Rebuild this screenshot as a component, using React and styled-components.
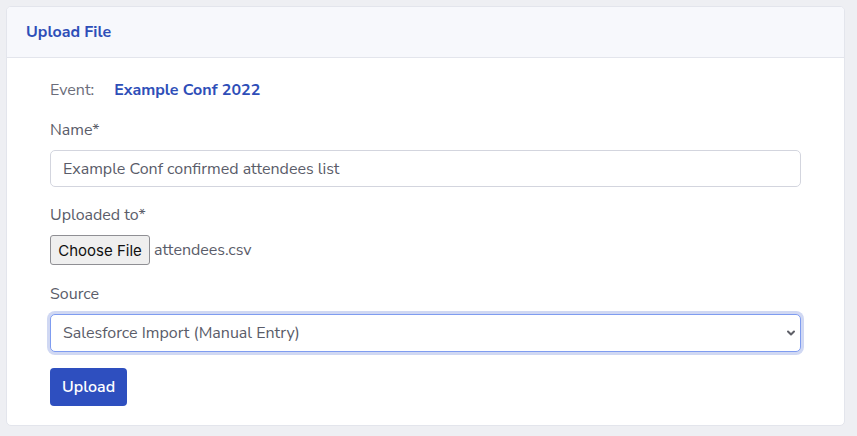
import React, { useState } from "react";
import styled, { createGlobalStyle } from "styled-components";

const GlobalStyle = createGlobalStyle`
  html, body {
    margin: 0;
    padding: 0;
    background: #eeeff3;
  }
  body {
    font-family: "Nunito Sans", "Open Sans", "Noto Sans", sans-serif;
    color: #5a5c69;
  }
`;

const Page = styled.div`
  padding: 6px 12px 10px 6px;
`;

const Card = styled.div`
  background: #fff;
  border: 1px solid #e3e5ec;
  border-radius: 5px;
  overflow: hidden;
`;

const CardHeader = styled.div`
  height: 50px;
  display: flex;
  align-items: center;
  padding: 0 19px;
  background: #f7f8fc;
  border-bottom: 1px solid #e3e5ec;
`;

const Title = styled.h2`
  margin: 0;
  font-size: 16px;
  font-weight: 700;
  color: #2e4eb8;
`;

const Form = styled.form`
  display: flex;
  flex-direction: column;
  padding: 21px 43px 19px;
`;

const EventRow = styled.div`
  display: flex;
  align-items: center;
  gap: 20px;
  font-size: 16px;
  line-height: 22px;
  margin-bottom: 18px;
`;

const EventLabel = styled.span`
  color: #6b6d7a;
`;

const EventName = styled.span`
  color: #2e4eb8;
  font-weight: 700;
`;

const Label = styled.label`
  font-size: 16px;
  line-height: 22px;
  margin-bottom: 9px;
`;

const Field = styled.div`
  display: flex;
  flex-direction: column;
  margin-bottom: ${(p) => p.$gap || 17}px;
`;

const TextInput = styled.input`
  box-sizing: border-box;
  height: 37px;
  padding: 0 12px;
  border: 1px solid #d3d5de;
  border-radius: 5px;
  font-family: inherit;
  font-size: 16px;
  color: #5a5c69;
  outline: none;
`;

const FileRow = styled.div`
  display: flex;
  align-items: center;
  gap: 4px;
  font-size: 16px;
  color: #5a5c69;
`;

const FileButton = styled.button`
  box-sizing: border-box;
  height: 30px;
  width: 100px;
  padding: 0;
  border: 1px solid #8f8f94;
  border-radius: 3px;
  background: #efefef;
  font-family: "Inter", "Liberation Sans", sans-serif;
  font-size: 15px;
  color: #111;
`;

const SelectWrap = styled.div`
  position: relative;
`;

const Select = styled.select`
  box-sizing: border-box;
  width: 100%;
  height: 38px;
  padding: 0 12px;
  appearance: none;
  border: 1px solid #7f9cf0;
  border-radius: 5px;
  box-shadow: 0 0 0 3px #d0d8f3;
  background: #fff;
  font-family: inherit;
  font-size: 16px;
  color: #5a5c69;
  outline: none;
`;

const Chevron = styled.svg`
  position: absolute;
  right: 4px;
  top: 50%;
  transform: translateY(-50%);
  pointer-events: none;
`;

const SubmitButton = styled.button`
  align-self: flex-start;
  height: 38px;
  padding: 0 12px;
  border: none;
  border-radius: 4px;
  background: #2e4fbf;
  color: #fff;
  font-family: inherit;
  font-size: 16px;
  font-weight: 600;
  cursor: pointer;
`;

const App = () => {
  const [name, setName] = useState("Example Conf confirmed attendees list");
  const [source, setSource] = useState("salesforce");

  return (
    <Page>
      <GlobalStyle />
      <Card>
        <CardHeader>
          <Title>Upload File</Title>
        </CardHeader>
        <Form onSubmit={(e) => e.preventDefault()}>
          <EventRow>
            <EventLabel>Event:</EventLabel>
            <EventName>Example Conf 2022</EventName>
          </EventRow>
          <Field>
            <Label>Name*</Label>
            <TextInput value={name} onChange={(e) => setName(e.target.value)} />
          </Field>
          <Field $gap={18}>
            <Label>Uploaded to*</Label>
            <FileRow>
              <FileButton type="button">Choose File</FileButton>
              <span>attendees.csv</span>
            </FileRow>
          </Field>
          <Field $gap={16}>
            <Label>Source</Label>
            <SelectWrap>
              <Select value={source} onChange={(e) => setSource(e.target.value)}>
                <option value="salesforce">Salesforce Import (Manual Entry)</option>
                <option value="csv">CSV Import</option>
              </Select>
              <Chevron width="12" height="12" viewBox="0 0 12 12">
                <path
                  d="M3 4.5 L6 7.5 L9 4.5"
                  fill="none"
                  stroke="#5f6068"
                  strokeWidth="2"
                  strokeLinecap="round"
                  strokeLinejoin="round"
                />
              </Chevron>
            </SelectWrap>
          </Field>
          <SubmitButton type="submit">Upload</SubmitButton>
        </Form>
      </Card>
    </Page>
  );
};

export default App;
